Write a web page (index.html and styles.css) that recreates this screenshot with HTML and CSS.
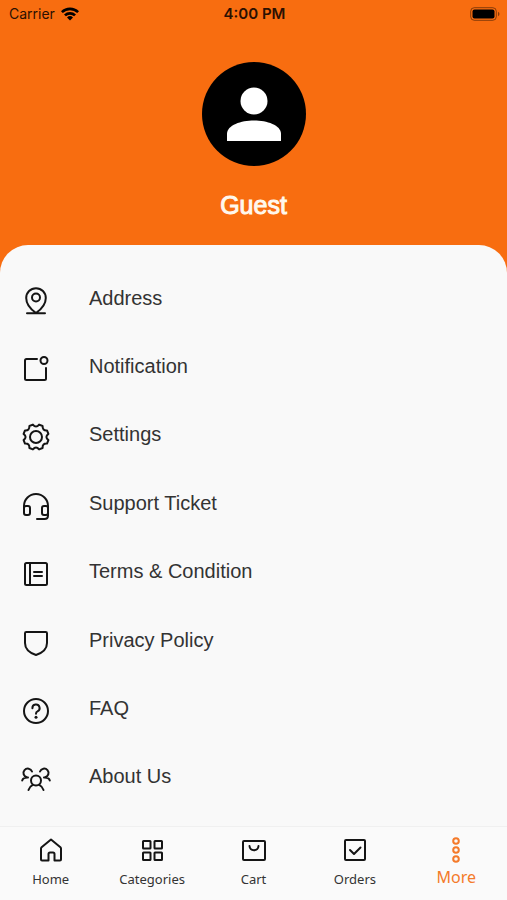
FILE: index.html
```html
<!DOCTYPE html>
<html lang="en">
<head>
    <meta charset="UTF-8">
    <meta name="viewport" content="width=device-width, initial-scale=1.0">
    <title>More</title>
    <link rel="stylesheet" href="styles.css">
</head>
<body>
    <header class="header">
        <div class="status-bar">
            <div class="carrier">
                <span>Carrier</span>
                <svg width="18" height="14" viewBox="0 0 18 14">
                    <path d="M0 4.2a13 13 0 0 1 18 0L16.2 6.1a10.4 10.4 0 0 0-14.4 0z"/>
                    <path d="M3 7.4a8.7 8.7 0 0 1 12 0l-1.9 1.9a6 6 0 0 0-8.2 0z"/>
                    <path d="M6 10.5a4.4 4.4 0 0 1 6 0L9 13.6z"/>
                </svg>
            </div>
            <div class="time">4:00 PM</div>
            <div class="battery">
                <svg width="30" height="14" viewBox="0 0 30 14">
                    <rect x="0.7" y="0.7" width="25.6" height="12.6" rx="3.6" fill="none" stroke="#000" stroke-opacity="0.45"/>
                    <rect x="2.5" y="2.5" width="22" height="9" rx="2"/>
                    <path d="M28 4.8c2 .8 2 3.6 0 4.4z" fill-opacity="0.45"/>
                </svg>
            </div>
        </div>
        <div class="avatar">
            <svg width="54" height="54" viewBox="0 0 54 54" fill="#fff">
                <circle cx="27" cy="14" r="13.5"/>
                <path d="M0 54V47C0 38 14 33.5 27 33.5S54 38 54 47V54z"/>
            </svg>
        </div>
        <h1 class="username">Guest</h1>
    </header>

    <main class="menu">
        <a class="menu-item" href="#">
            <svg class="icon" viewBox="0 0 32 32">
                <path d="M16 28C11 24.5 6.2 19.5 6.2 13a9.8 9.8 0 0 1 19.6 0C25.8 19.5 21 24.5 16 28zM7 28.2h18"/>
                <circle cx="16" cy="12.500" r="4"/>
            </svg>
            <span>Address</span>
        </a>
        <a class="menu-item" href="#">
            <svg class="icon" viewBox="0 0 32 32">
                <path d="M17 6H6.5Q5 6 5 7.5V25.5Q5 27 6.5 27H24.500Q26 27 26 25.5V15"/>
                <circle cx="24" cy="7.500" r="3.500"/>
            </svg>
            <span>Notification</span>
        </a>
        <a class="menu-item" href="#">
            <svg class="icon" viewBox="0 0 32 32">
                <path d="M28.4 12.9Q24.4 16 28.4 19.1L27 22.6Q22.3 22.3 22.6 27L19.1 28.4Q16 24.4 12.9 28.4L9.4 27Q9.7 22.3 5 22.6L3.6 19.1Q7.6 16 3.6 12.9L5 9.4Q9.7 9.7 9.4 5L12.9 3.6Q16 7.6 19.1 3.6L22.6 5Q22.3 9.7 27 9.4z"/>
                <circle cx="16" cy="16" r="6"/>
            </svg>
            <span>Settings</span>
        </a>
        <a class="menu-item" href="#">
            <svg class="icon" viewBox="0 0 32 32">
                <path d="M4 19V16a12 12 0 0 1 24 0V25.500Q28 29 24.500 29H17"/>
                <rect x="4" y="16" width="6" height="9" rx="2"/>
                <rect x="22" y="16" width="6" height="9" rx="2"/>
            </svg>
            <span>Support Ticket</span>
        </a>
        <a class="menu-item" href="#">
            <svg class="icon" viewBox="0 0 32 32">
                <rect x="5" y="5" width="22" height="22" rx="1.500"/>
                <path d="M10 5v22M14 14h8M14 18h8"/>
            </svg>
            <span>Terms &amp; Condition</span>
        </a>
        <a class="menu-item" href="#">
            <svg class="icon" viewBox="0 0 32 32">
                <path d="M6.3 5H25.7Q27 5 27 6.3V16C27 22 22 26 16 28C10 26 5 22 5 16V6.3Q5 5 6.3 5z"/>
            </svg>
            <span>Privacy Policy</span>
        </a>
        <a class="menu-item" href="#">
            <svg class="icon" viewBox="0 0 32 32">
                <circle cx="16" cy="16" r="12"/>
                <path d="M12.4 13.2A3.6 3.6 0 1 1 17.5 16.3Q16 17 16 18.8"/>
                <circle class="dot" cx="16" cy="22.300" r="1.500"/>
            </svg>
            <span>FAQ</span>
        </a>
        <a class="menu-item" href="#">
            <svg class="icon" viewBox="0 0 32 32">
                <circle cx="16" cy="17.500" r="5"/>
                <path d="M8.5 27C9.3 24.500 10.800 22.800 12.800 21.800M23.5 27C22.700 24.500 21.200 22.800 19.200 21.800"/>
                <path d="M12 8.500A4.400 4.400 0 1 0 7 14.300M2.200 17.500C2.800 15.500 4.500 14.300 8 14.500"/>
                <path d="M20 8.500A4.400 4.400 0 1 1 25 14.300M29.800 17.500C29.200 15.500 27.500 14.300 24 14.500"/>
            </svg>
            <span>About Us</span>
        </a>
    </main>

    <nav class="tabs">
        <a class="tab" href="#">
            <svg class="tab-icon" viewBox="0 0 28 28">
                <path d="M4 12.5Q4 11.8 4.6 11.2L14 3.500L23.4 11.2Q24 11.8 24 12.5V23.5Q24 24.5 23 24.5H17.500V18Q17.500 16.500 16 16.500H13Q11.500 16.500 11.500 18V24.500H5Q4 24.5 4 23.5z"/>
            </svg>
            <span>Home</span>
        </a>
        <a class="tab" href="#">
            <svg class="tab-icon" viewBox="0 0 28 28">
                <rect x="5" y="5" width="7.500" height="7.500" rx="0.500"/>
                <rect x="16.500" y="5" width="7.500" height="7.500" rx="0.500"/>
                <rect x="5" y="16.500" width="7.500" height="7.500" rx="0.500"/>
                <rect x="16.500" y="16.500" width="7.500" height="7.500" rx="0.500"/>
            </svg>
            <span>Categories</span>
        </a>
        <a class="tab" href="#">
            <svg class="tab-icon" viewBox="0 0 28 28">
                <rect x="3" y="5" width="22" height="19" rx="1"/>
                <path d="M9.5 10C10 15.5 18 15.5 18.5 10"/>
            </svg>
            <span>Cart</span>
        </a>
        <a class="tab" href="#">
            <svg class="tab-icon" viewBox="0 0 28 28">
                <rect x="4" y="4" width="20" height="20" rx="1"/>
                <path d="M9 14l4 4 6.500-6.500"/>
            </svg>
            <span>Orders</span>
        </a>
        <a class="tab active" href="#">
            <svg class="tab-icon" viewBox="0 0 28 28">
                <circle cx="14" cy="5" r="2.800"/>
                <circle cx="14" cy="14" r="2.800"/>
                <circle cx="14" cy="23" r="2.800"/>
            </svg>
            <span>More</span>
        </a>
    </nav>
</body>
</html>
```

FILE: styles.css
```css
* {
    box-sizing: border-box;
}
body {
    margin: 0;
    min-height: 100vh;
    display: flex;
    flex-direction: column;
    background-color: #f86d10;
    font-family: "Liberation Sans", Arial, sans-serif;
}
.header {
    display: flex;
    flex-direction: column;
    align-items: center;
}
.status-bar {
    width: 100%;
    display: grid;
    grid-template-columns: 1fr auto 1fr;
    align-items: center;
    height: 27px;
    padding: 0 7px 0 9px;
    font-family: Inter, sans-serif;
    font-size: 14px;
    color: #2b1002;
}
.carrier {
    display: flex;
    align-items: center;
    gap: 6px;
}
.time {
    font-size: 15px;
    font-weight: 600;
}
.battery {
    display: flex;
    justify-content: flex-end;
}
.avatar {
    display: flex;
    align-items: center;
    justify-content: center;
    width: 104px;
    height: 104px;
    margin-top: 35px;
    border-radius: 50%;
    background: #000;
}
.username {
    margin: 24px 0;
    font-size: 25px;
    font-weight: normal;
    line-height: 31px;
    color: #fff8ee;
    -webkit-text-stroke: 1px #fff8ee;
}
.menu {
    flex: 1;
    display: flex;
    flex-direction: column;
    padding: 19px 20px 15px;
    background: #f9f9f9;
    border-radius: 28px 28px 0 0;
}
.menu-item {
    flex: 1;
    display: flex;
    align-items: center;
    gap: 37px;
    font-size: 20px;
    color: #333;
    text-decoration: none;
}
.icon {
    width: 32px;
    height: 32px;
    margin-top: 5px;
}
.icon, .tab-icon {
    fill: none;
    stroke: #151515;
    stroke-width: 2;
    stroke-linecap: round;
    stroke-linejoin: round;
}
.icon .dot {
    fill: #151515;
    stroke: none;
}
.tabs {
    display: flex;
    height: 74px;
    background: #fafafa;
    border-top: 1px solid #f0f0f0;
}
.tab {
    flex: 1;
    display: flex;
    flex-direction: column;
    align-items: center;
    gap: 5px;
    padding-top: 9px;
    font-family: "Noto Sans", sans-serif;
    font-size: 13px;
    line-height: 20px;
    color: #333;
    text-decoration: none;
}
.tab-icon {
    width: 28px;
    height: 28px;
}
.tab.active {
    gap: 3px;
    font-size: 16px;
    color: #f47a2a;
}
.tab.active .tab-icon {
    stroke: #f47a2a;
}
```
